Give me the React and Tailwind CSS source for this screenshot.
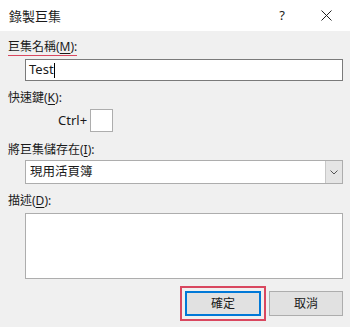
export default function App() {
  const font = {
    fontFamily: '"Noto Sans", "Noto Sans CJK TC", sans-serif',
  };

  return (
    <div
      className="w-[350px] h-[327px] overflow-hidden bg-[#f0f0f0] text-[12px] text-[#1a1a1a] flex flex-col"
      style={font}
    >
      {/* 標題列 */}
      <div className="h-[31px] bg-white flex items-center shrink-0">
        <div className="pl-[9px] flex-1 text-[13px] leading-[16px] pt-[1px]">錄製巨集</div>
        <div className="w-[20px] text-center text-[13px] mr-[26px]">?</div>
        <div className="w-[16px] flex justify-center mr-[16px]">
          <svg width="11" height="11" viewBox="0 0 11 11">
            <path d="M0.5 0.5 L10.5 10.5 M10.5 0.5 L0.5 10.5" stroke="#222" strokeWidth="1" />
          </svg>
        </div>
      </div>

      <div className="flex flex-col pl-[8px] pr-[7px]">
        {/* 巨集名稱 */}
        <div className="mt-[8px] h-[16px] leading-[15px]">
          <span className="inline-block border-b border-[#d9475f] pb-[1px]">
            巨集名稱(<span className="underline underline-offset-2">M</span>):
          </span>
        </div>
        <div className="ml-[17px] mt-[4px] h-[22px] bg-white border border-[#7a7a7a] flex items-center px-[3px] text-[13px]">
          <span>Test</span>
          <span className="w-[1px] h-[15px] bg-black" />
        </div>

        {/* 快速鍵 */}
        <div className="mt-[9px] leading-[16px]">
          快速鍵(<span className="underline underline-offset-2">K</span>):
        </div>
        <div className="mt-[3px] flex items-center">
          <span className="ml-[50px] w-[30px] text-[13px]">Ctrl+</span>
          <div className="ml-[2px] w-[23px] h-[23px] bg-white border border-[#adadad]" />
        </div>

        {/* 將巨集儲存在 */}
        <div className="mt-[10px] leading-[16px]">
          將巨集儲存在(<span className="underline underline-offset-2">I</span>):
        </div>
        <div className="ml-[17px] mt-[2px] h-[24px] bg-white border border-[#adadad] flex items-stretch">
          <div className="flex-1 flex items-center pl-[4px] text-[12.5px]">現用活頁簿</div>
          <div className="w-[17px] bg-[#e5e5e5] border-l border-[#c8c8c8] flex items-center justify-center">
            <svg width="8" height="5" viewBox="0 0 8 5">
              <path d="M0.5 0.5 L4 4 L7.5 0.5" stroke="#555" strokeWidth="1" fill="none" />
            </svg>
          </div>
        </div>

        {/* 描述 */}
        <div className="mt-[9px] leading-[16px]">
          描述(<span className="underline underline-offset-2">D</span>):
        </div>
        <div className="ml-[17px] mt-[4px] h-[66px] bg-white border border-[#adadad]" />

        {/* 按鈕 */}
        <div className="mt-[7px] flex justify-end items-center">
          <div className="border-2 border-[#d9475f] p-[3px] mr-[3px]">
            <button className="w-[76px] h-[25px] bg-[#e1e1e1] border-2 border-[#0078d7] flex items-center justify-center">
              確定
            </button>
          </div>
          <button className="w-[74px] h-[25px] bg-[#e1e1e1] border border-[#adadad] flex items-center justify-center">
            取消
          </button>
        </div>
      </div>
    </div>
  );
}
